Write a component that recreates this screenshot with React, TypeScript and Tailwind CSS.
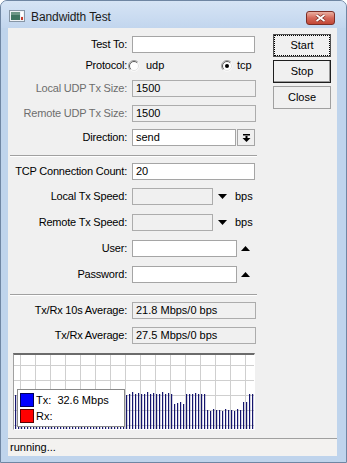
import clsx from 'clsx'
import type { ReactNode } from 'react'

// bar tops in page coords, chart inner area starts at x 14 / y 355
function topAt(px: number, i: number) {
  if (px < 127) return 395
  if (px < 172) return [394, 393, 394, 394, 392][i % 5]
  if (px < 185) return [403, 402, 404][i % 3]
  if (px < 205) return i % 4 === 0 ? 393 : 394
  if (px < 243) return [410, 411, 409, 410][i % 4]
  if (px < 248) return 402
  return 394
}

const bars = Array.from({ length: 80 }, (_, i) => {
  const x = 1 + i * 3
  return { x, y: topAt(14 + x, i) - 355 }
})

function Box({ w, value, ro }: { w: string; value?: string; ro?: boolean }) {
  return (
    <div
      className={clsx(
        'flex h-[17px] items-center border px-[3px] leading-[15px]',
        ro ? 'border-[#acacac] bg-[#f0f0f0]' : 'border-[#a5a5a5] bg-white',
        w
      )}
    >
      {value}
    </div>
  )
}

function Row({ label, dim, className, children }: { label: string; dim?: boolean; className?: string; children: ReactNode }) {
  return (
    <div className={clsx('flex h-[17px] items-center', className)}>
      <span className={clsx('w-[119px] text-right tracking-[-0.2px] whitespace-nowrap', dim ? 'text-[#6d6d6d]' : 'text-black')}>
        {label}
      </span>
      <div className="ml-[5px] flex items-center">{children}</div>
    </div>
  )
}

function Tri({ up }: { up?: boolean }) {
  return (
    <svg width="9" height="5" viewBox="0 0 9 5">
      <path d={up ? 'M0 5h9L4.5 0z' : 'M0 0h9L4.5 5z'} fill="#000" />
    </svg>
  )
}

function Radio({ checked }: { checked?: boolean }) {
  return (
    <svg width="12" height="12" viewBox="0 0 12 12">
      <circle cx="6" cy="6" r="5.5" fill="#fff" />
      <path d="M2.1 9.9A5.5 5.5 0 0 1 9.9 2.1" fill="none" stroke="#a0a0a0" />
      <path d="M2.8 9.2A4.5 4.5 0 0 1 9.2 2.8" fill="none" stroke="#5a5a5a" />
      <path d="M9.2 2.8A4.5 4.5 0 0 1 2.8 9.2" fill="none" stroke="#e3e3e3" />
      {checked && <circle cx="6" cy="6" r="2" fill="#000" />}
    </svg>
  )
}

function Sep({ className }: { className?: string }) {
  return <div className={clsx('ml-[2px] h-[2px] w-[247px] border-t border-b border-t-[#a0a0a0] border-b-white', className)} />
}

export default function App() {
  return (
    <div className="h-[463px] w-[347px] overflow-hidden bg-white font-['Liberation_Sans',Arial,sans-serif] text-[11px] text-black">
      <div className="flex h-full flex-col rounded-t-[7px] border border-[#6f86a3] bg-[#bfd4ec]">
        {/* title bar */}
        <div className="flex h-[27px] rounded-t-[6px] bg-gradient-to-b from-[#d6e4f5] to-[#c2d6ee] pl-[8px] pr-[11px]">
          <svg className="mt-[9px]" width="16" height="12" viewBox="0 0 16 12">
            <rect x="0.5" y="0.5" width="15" height="11" fill="#eef2f6" stroke="#8796a6" />
            <rect x="2" y="2" width="9" height="8" fill="#3e7461" />
            <rect x="2" y="2" width="9" height="3" fill="#6c9686" />
            <rect x="12" y="2" width="2" height="4" fill="#fff" />
            <rect x="12" y="7" width="2" height="3" fill="#c83a2a" />
          </svg>
          <span className="ml-[6px] mt-[9px] text-[12px] leading-[14px] tracking-[-0.1px] text-[#1b1b1b]">Bandwidth Test</span>
          <div className="ml-auto mt-[10px] flex h-[14px] w-[29px] items-center justify-center rounded-[3px] border border-[#7c2e26] bg-gradient-to-b from-[#eab0a2] via-[#d4685a] to-[#c24634]">
            <svg width="11" height="8" viewBox="0 0 11 8">
              <path d="M1.5 1L9.5 7M9.5 1L1.5 7" stroke="#7a2a20" strokeWidth="3.2" />
              <path d="M1.5 1L9.5 7M9.5 1L1.5 7" stroke="#fff" strokeWidth="1.8" />
            </svg>
          </div>
        </div>

        {/* client */}
        <div className="mb-[6px] ml-[7px] mr-[9px] flex flex-1 flex-col bg-[#f0f0f0]">
          <div className="flex flex-1">
            <div className="flex w-[250px] flex-col pt-[8px]">
              <Row label="Test To:">
                <Box w="w-[123px]" />
              </Row>
              <div className="mt-[4px] flex h-[17px] items-center">
                <span className="w-[119px] text-right tracking-[-0.2px]">Protocol:</span>
                <div className="ml-[1px] flex w-[93px] items-center gap-[6px]">
                  <Radio />
                  <span>udp</span>
                </div>
                <div className="flex items-center gap-[4px]">
                  <Radio checked />
                  <span>tcp</span>
                </div>
              </div>
              <Row label="Local UDP Tx Size:" dim className="mt-[6px]">
                <Box w="w-[124px]" value="1500" ro />
              </Row>
              <Row label="Remote UDP Tx Size:" dim className="mt-[8px]">
                <Box w="w-[124px]" value="1500" ro />
              </Row>
              <Row label="Direction:" className="mt-[7px]">
                <Box w="w-[104px]" value="send" />
                <div className="ml-[1px] flex h-[17px] w-[18px] items-center justify-center border border-[#a5a5a5] bg-[#f0f0f0]">
                  <svg width="9" height="10" viewBox="0 0 9 10">
                    <rect x="1" y="1" width="7" height="1.5" fill="#000" />
                    <rect x="3.5" y="3" width="2" height="2" fill="#000" />
                    <path d="M0.5 5h8L4.5 9z" fill="#000" />
                  </svg>
                </div>
              </Row>
              <Sep className="mt-[9px]" />
              <Row label="TCP Connection Count:" className="mt-[6px]">
                <Box w="w-[123px]" value="20" />
              </Row>
              <Row label="Local Tx Speed:" className="mt-[8px]">
                <Box w="w-[81px]" ro />
                <span className="ml-[5px]"><Tri /></span>
                <span className="ml-[8px]">bps</span>
              </Row>
              <Row label="Remote Tx Speed:" className="mt-[9px]">
                <Box w="w-[81px]" ro />
                <span className="ml-[5px]"><Tri /></span>
                <span className="ml-[8px]">bps</span>
              </Row>
              <Row label="User:" className="mt-[9px]">
                <Box w="w-[105px]" />
                <span className="ml-[4px]"><Tri up /></span>
              </Row>
              <Row label="Password:" className="mt-[9px]">
                <Box w="w-[105px]" />
                <span className="ml-[4px]"><Tri up /></span>
              </Row>
              <Sep className="mt-[11px]" />
              <Row label="Tx/Rx 10s Average:" className="mt-[6px]">
                <Box w="w-[124px]" value="21.8 Mbps/0 bps" ro />
              </Row>
              <Row label="Tx/Rx Average:" className="mt-[8px]">
                <Box w="w-[124px]" value="27.5 Mbps/0 bps" ro />
              </Row>

              {/* chart */}
              <div className="relative ml-[5px] mt-[9px] h-[77px] w-[242px] border-t-2 border-r border-b border-l border-t-[#6b6b6b] border-r-white border-b-white border-l-[#a0a0a0] bg-white">
                <svg width="240" height="74" viewBox="0 0 240 74" className="block">
                  {Array.from({ length: 16 }, (_, k) => (
                    <rect key={'v' + k} x={6 + k * 15} y="0" width="1" height="74" fill="#cfcfcf" />
                  ))}
                  {[10, 25, 40, 55, 70].map((y) => (
                    <rect key={'h' + y} x="0" y={y} width="240" height="1" fill="#cfcfcf" />
                  ))}
                  {bars.map((b) => (
                    <rect key={b.x} x={b.x} y={b.y} width="1.2" height={74 - b.y} fill="#16166e" />
                  ))}
                </svg>
                <div className="absolute left-[3px] top-[34px] flex h-[38px] w-[108px] flex-col gap-[2px] border border-[#8a8a8a] bg-white pl-[2px] pt-[3px]">
                  <div className="flex h-[14px] items-center gap-[2px]">
                    <span className="h-[14px] w-[14px] border border-[#00005a] bg-[#0000ff]" />
                    <span className="whitespace-pre">Tx:  32.6 Mbps</span>
                  </div>
                  <div className="flex h-[14px] items-center gap-[2px]">
                    <span className="h-[14px] w-[14px] border border-[#5a0000] bg-[#ff0000]" />
                    <span>Rx:</span>
                  </div>
                </div>
              </div>
            </div>

            {/* buttons */}
            <div className="ml-[15px] flex flex-col gap-[3px] pt-[6px]">
              <button className="relative h-[23px] w-[58px] border border-[#505050] bg-[#f0f0f0]">
                <span className="absolute inset-0 border border-dotted border-black" />
                Start
              </button>
              <button className="h-[23px] w-[58px] border border-[#1e1e1e] bg-[#f0f0f0] shadow-[inset_-1px_-1px_0_#9a9a9a]">Stop</button>
              <button className="h-[23px] w-[58px] border border-[#a0a0a0] bg-[#f0f0f0]">Close</button>
            </div>
          </div>

          {/* status bar */}
          <div className="flex h-[18px] items-center border-t border-[#a0a0a0] bg-[#f3f2f0] pl-[2px]">running...</div>
        </div>
      </div>
    </div>
  )
}
